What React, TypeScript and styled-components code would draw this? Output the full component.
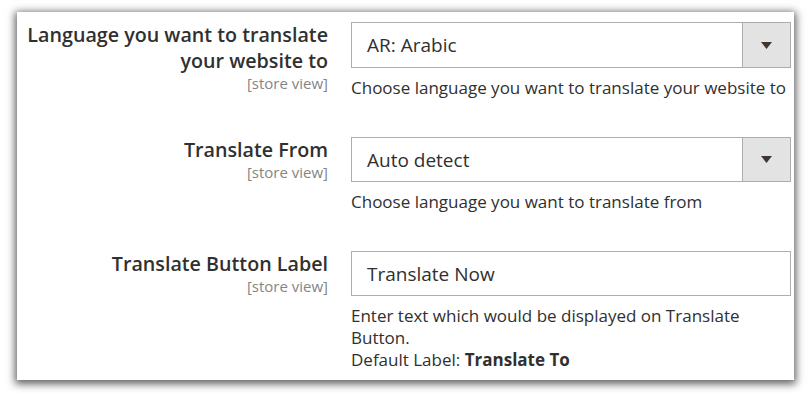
import styled, { createGlobalStyle } from 'styled-components';

const GlobalStyle = createGlobalStyle`
  html, body {
    margin: 0;
    padding: 0;
    background: #ffffff;
  }
  body {
    font-family: 'Open Sans', 'Noto Sans', sans-serif;
    color: #303030;
  }
`;

const Page = styled.div`
  box-sizing: border-box;
  height: 394px;
  padding: 12px 0 0 17px;
`;

const Panel = styled.section`
  box-sizing: border-box;
  width: 777px;
  height: 368px;
  padding: 10px 3px 0 10px;
  background: #ffffff;
  box-shadow: 0 2px 8px 2px rgba(0, 0, 0, 0.62);
`;

const Row = styled.div`
  display: grid;
  grid-template-columns: 301px 440px;
  column-gap: 23px;
  margin-bottom: 38px;
`;

const LabelCell = styled.div`
  text-align: right;
`;

const LabelText = styled.div`
  font-size: 19.7px;
  font-weight: 600;
  line-height: 26px;
  color: #303030;
`;

const Scope = styled.div`
  font-size: 15px;
  line-height: 18px;
  color: #858585;
`;

const Field = styled.div<{ $tall?: boolean }>`
  box-sizing: border-box;
  display: flex;
  align-items: stretch;
  height: ${(p) => (p.$tall ? '46px' : '45px')};
  border: 1px solid #adadad;
  background: #ffffff;
`;

const Value = styled.div`
  flex: 1;
  display: flex;
  align-items: center;
  padding-left: 15px;
  font-size: 19px;
  color: #303030;
`;

const ArrowBox = styled.div`
  width: 47px;
  display: flex;
  align-items: center;
  justify-content: center;
  border-left: 1px solid #adadad;
  background: #e3e3e3;
`;

const Note = styled.div`
  margin-top: 9px;
  font-size: 17px;
  line-height: 22px;
  color: #303030;

  strong {
    font-weight: 700;
  }
`;

const Arrow = () => (
  <svg width="11" height="7" viewBox="0 0 11 7">
    <path d="M0 0H11L5.5 7Z" fill="#41362f" />
  </svg>
);

export default function App() {
  return (
    <Page>
      <GlobalStyle />
      <Panel>
        <Row>
          <LabelCell>
            <LabelText>
              Language you want to translate
              <br />
              your website to
            </LabelText>
            <Scope>[store view]</Scope>
          </LabelCell>
          <div>
            <Field $tall>
              <Value>AR: Arabic</Value>
              <ArrowBox>
                <Arrow />
              </ArrowBox>
            </Field>
            <Note>Choose language you want to translate your website to</Note>
          </div>
        </Row>
        <Row>
          <LabelCell>
            <LabelText>Translate From</LabelText>
            <Scope>[store view]</Scope>
          </LabelCell>
          <div>
            <Field>
              <Value>Auto detect</Value>
              <ArrowBox>
                <Arrow />
              </ArrowBox>
            </Field>
            <Note>Choose language you want to translate from</Note>
          </div>
        </Row>
        <Row>
          <LabelCell>
            <LabelText>Translate Button Label</LabelText>
            <Scope>[store view]</Scope>
          </LabelCell>
          <div>
            <Field>
              <Value>Translate Now</Value>
            </Field>
            <Note>
              Enter text which would be displayed on Translate
              <br />
              Button.
              <br />
              Default Label: <strong>Translate To</strong>
            </Note>
          </div>
        </Row>
      </Panel>
    </Page>
  );
}
